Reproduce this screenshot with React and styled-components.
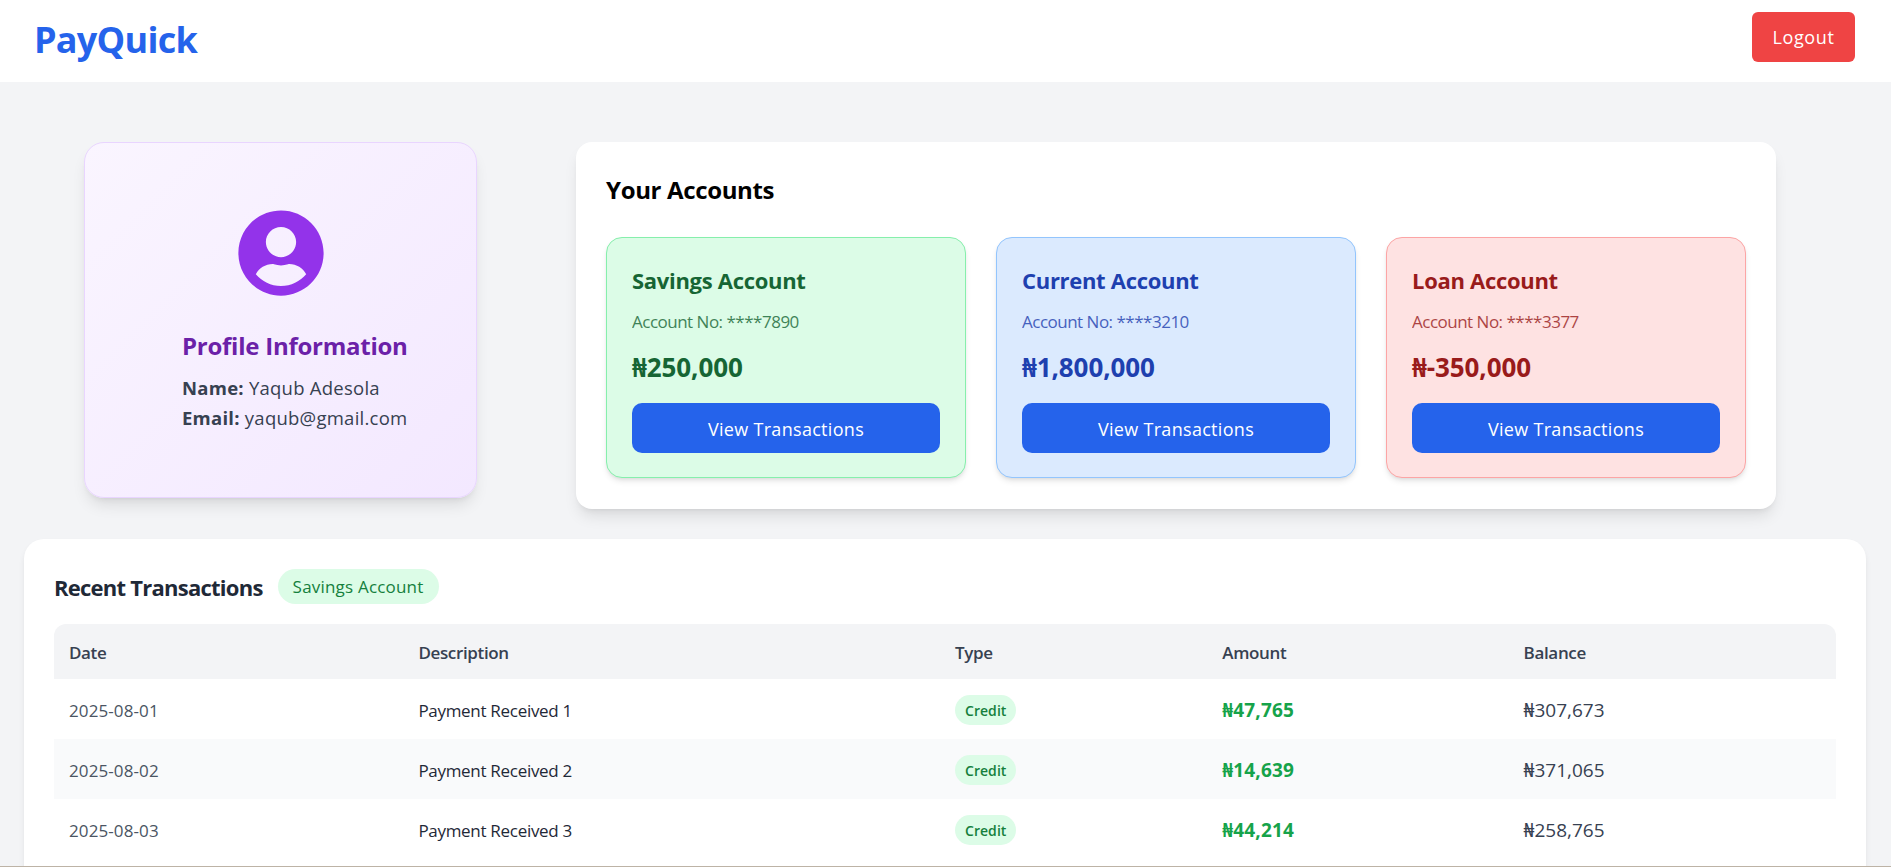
import React from 'react'
import styled, { createGlobalStyle } from 'styled-components'
import { FaUserCircle } from 'react-icons/fa'

const GlobalStyle = createGlobalStyle`
  html, body {
    margin: 0;
    height: 100%;
    overflow: hidden;
    background: #f3f4f6;
    font-family: 'Open Sans', 'Noto Sans', sans-serif;
  }
  * {
    box-sizing: border-box;
  }
`

const Header = styled.header`
  display: flex;
  align-items: flex-start;
  justify-content: space-between;
  height: 82px;
  padding: 12px 36px 0 34px;
  background: #fff;
`

const Logo = styled.div`
  color: #2563eb;
  font-size: 36px;
  font-weight: 700;
  line-height: 55px;
  letter-spacing: -0.75px;
`

const LogoutButton = styled.button`
  width: 103px;
  height: 50px;
  border: none;
  border-radius: 6px;
  background: #ef4444;
  color: #fff;
  font: inherit;
  font-size: 18px;
  letter-spacing: 0.6px;
`

const TopRow = styled.section`
  display: flex;
  align-items: flex-start;
  gap: 99px;
  padding: 60px 115px 30px 84px;
`

const ProfileCard = styled.div`
  flex: 0 0 393px;
  height: 356px;
  padding-top: 65.5px;
  border: 1px solid #e9d5ff;
  border-radius: 20px;
  background: linear-gradient(135deg, #faf5ff, #f3e8ff);
  box-shadow: 0 10px 15px -3px rgba(0, 0, 0, 0.1), 0 4px 6px -4px rgba(0, 0, 0, 0.1);
`

const Avatar = styled(FaUserCircle)`
  display: block;
  width: 88px;
  height: 88px;
  margin: 0 auto 33px;
  color: #9333ea;
`

const ProfileInfo = styled.div`
  margin-left: 97px;
`

const ProfileTitle = styled.h2`
  margin: 0 0 11px;
  color: #6b21a8;
  font-size: 24px;
  font-weight: 700;
  line-height: 32px;
  letter-spacing: -0.25px;
`

const ProfileLine = styled.p`
  margin: 0;
  color: #374151;
  font-size: 18.5px;
  line-height: 30px;
  letter-spacing: 0.25px;
`

const AccountsPanel = styled.div`
  flex: 0 0 1200px;
  height: 367px;
  padding: 30px;
  border-radius: 16px;
  background: #fff;
  box-shadow: 0 10px 15px -3px rgba(0, 0, 0, 0.1), 0 4px 6px -4px rgba(0, 0, 0, 0.1);
`

const PanelTitle = styled.h2`
  margin: 0 0 30px;
  padding-top: 1px;
  height: 35px;
  color: #000;
  font-size: 24px;
  font-weight: 700;
  line-height: 34px;
  letter-spacing: -0.35px;
`

const AccountGrid = styled.div`
  display: grid;
  grid-template-columns: repeat(3, 1fr);
  gap: 30px;
`

const AccountCard = styled.div`
  height: 241px;
  padding: 25px;
  border: 1px solid ${p => p.$border};
  border-radius: 16px;
  background: ${p => p.$bg};
  color: ${p => p.$color};
  box-shadow: 0 4px 6px -1px rgba(0, 0, 0, 0.1), 0 2px 4px -2px rgba(0, 0, 0, 0.1);
`

const AccountName = styled.h3`
  margin: 0 0 12px;
  font-size: 22px;
  font-weight: 700;
  line-height: 34px;
  letter-spacing: -0.3px;
`

const AccountNumber = styled.p`
  margin: 0 0 14px;
  font-size: 17px;
  line-height: 26px;
  opacity: 0.8;
  letter-spacing: -0.5px;
`

const AccountBalance = styled.p`
  margin: 0 0 18px;
  font-size: 26px;
  font-weight: 700;
  line-height: 36px;
  letter-spacing: -0.1px;
`

const ViewButton = styled.button`
  display: block;
  width: 100%;
  height: 50px;
  padding: 2px 0 0;
  border: none;
  border-radius: 10px;
  background: #2563eb;
  color: #fff;
  font: inherit;
  font-size: 18px;
  letter-spacing: 0.3px;
`

const TransactionsPanel = styled.section`
  margin: 0 25px 0 24px;
  padding: 30px;
  border-radius: 20px;
  background: #fff;
  box-shadow: 0 4px 6px -1px rgba(0, 0, 0, 0.1);
`

const TransactionsHead = styled.div`
  display: flex;
  align-items: center;
  gap: 15px;
  margin-bottom: 20px;
`

const TransactionsTitle = styled.h2`
  margin: 0;
  color: #1f2937;
  font-size: 22px;
  font-weight: 700;
  letter-spacing: -0.75px;
`

const AccountPill = styled.span`
  display: flex;
  align-items: center;
  height: 35px;
  padding: 0 15px;
  border-radius: 18px;
  background: #dcfce7;
  color: #15803d;
  font-size: 17px;
  font-weight: 500;
  letter-spacing: 0.2px;
`

const Table = styled.table`
  width: 100%;
  border-collapse: collapse;
  table-layout: fixed;
`

const HeadRow = styled.tr`
  height: 55px;
  background: #f3f4f6;
`

const HeadCell = styled.th`
  padding: 2px 15px 0;
  color: #374151;
  font-size: 17px;
  font-weight: 600;
  text-align: left;
  letter-spacing: -0.35px;
  &:first-child {
    border-top-left-radius: 12px;
  }
  &:last-child {
    border-top-right-radius: 12px;
  }
`

const Row = styled.tr`
  height: 60px;
  &:nth-child(even) {
    background: #f9fafb;
  }
`

const Cell = styled.td`
  padding: 2px 15px 0;
  color: #1f2937;
  font-size: 17px;
  letter-spacing: -0.3px;
`

const DateCell = styled(Cell)`
  color: #4b5563;
  letter-spacing: 0.1px;
`

const MoneyCell = styled(Cell)`
  color: ${p => p.$color};
  font-size: 19px;
  font-weight: ${p => p.$bold ? 700 : 400};
  letter-spacing: ${p => p.$bold ? '0.15px' : '0'};
`

const TypeBadge = styled.span`
  display: inline-flex;
  align-items: center;
  height: 30px;
  padding: 0 10px;
  border-radius: 15px;
  background: #dcfce7;
  color: #15803d;
  font-size: 14px;
  font-weight: 600;
  letter-spacing: 0.05px;
`

const BottomEdge = styled.div`
  position: fixed;
  left: 0;
  right: 0;
  bottom: 0;
  height: 1px;
  background: #bdb3a6;
`

const accounts = [
  { name: 'Savings Account', number: '****7890', balance: '₦250,000', bg: '#dcfce7', border: '#86efac', color: '#166534' },
  { name: 'Current Account', number: '****3210', balance: '₦1,800,000', bg: '#dbeafe', border: '#93c5fd', color: '#1e40af' },
  { name: 'Loan Account', number: '****3377', balance: '₦-350,000', bg: '#fee2e2', border: '#fca5a5', color: '#991b1b' },
]

const transactions = [
  { date: '2025-08-01', description: 'Payment Received 1', amount: '₦47,765', balance: '₦307,673' },
  { date: '2025-08-02', description: 'Payment Received 2', amount: '₦14,639', balance: '₦371,065' },
  { date: '2025-08-03', description: 'Payment Received 3', amount: '₦44,214', balance: '₦258,765' },
]

const columns = [
  { label: 'Date', width: 349 },
  { label: 'Description', width: 536 },
  { label: 'Type', width: 267 },
  { label: 'Amount', width: 301 },
  { label: 'Balance', width: 327 },
]

const App = () => (
  <>
    <GlobalStyle />
    <Header>
      <Logo>PayQuick</Logo>
      <LogoutButton>Logout</LogoutButton>
    </Header>

    <TopRow>
      <ProfileCard>
        <Avatar />
        <ProfileInfo>
          <ProfileTitle>Profile Information</ProfileTitle>
          <ProfileLine><strong>Name:</strong> Yaqub Adesola</ProfileLine>
          <ProfileLine><strong>Email:</strong> yaqub@gmail.com</ProfileLine>
        </ProfileInfo>
      </ProfileCard>

      <AccountsPanel>
        <PanelTitle>Your Accounts</PanelTitle>
        <AccountGrid>
          {accounts.map(a => (
            <AccountCard key={a.name} $bg={a.bg} $border={a.border} $color={a.color}>
              <AccountName>{a.name}</AccountName>
              <AccountNumber>Account No: {a.number}</AccountNumber>
              <AccountBalance>{a.balance}</AccountBalance>
              <ViewButton>View Transactions</ViewButton>
            </AccountCard>
          ))}
        </AccountGrid>
      </AccountsPanel>
    </TopRow>

    <TransactionsPanel>
      <TransactionsHead>
        <TransactionsTitle>Recent Transactions</TransactionsTitle>
        <AccountPill>Savings Account</AccountPill>
      </TransactionsHead>
      <Table>
        <colgroup>
          {columns.map(c => <col key={c.label} width={c.width} />)}
        </colgroup>
        <thead>
          <HeadRow>
            {columns.map(c => <HeadCell key={c.label}>{c.label}</HeadCell>)}
          </HeadRow>
        </thead>
        <tbody>
          {transactions.map(t => (
            <Row key={t.date}>
              <DateCell>{t.date}</DateCell>
              <Cell>{t.description}</Cell>
              <Cell><TypeBadge>Credit</TypeBadge></Cell>
              <MoneyCell $color="#16a34a" $bold>{t.amount}</MoneyCell>
              <MoneyCell $color="#374151">{t.balance}</MoneyCell>
            </Row>
          ))}
          <Row />
        </tbody>
      </Table>
    </TransactionsPanel>
    <BottomEdge />
  </>
)

export default App
